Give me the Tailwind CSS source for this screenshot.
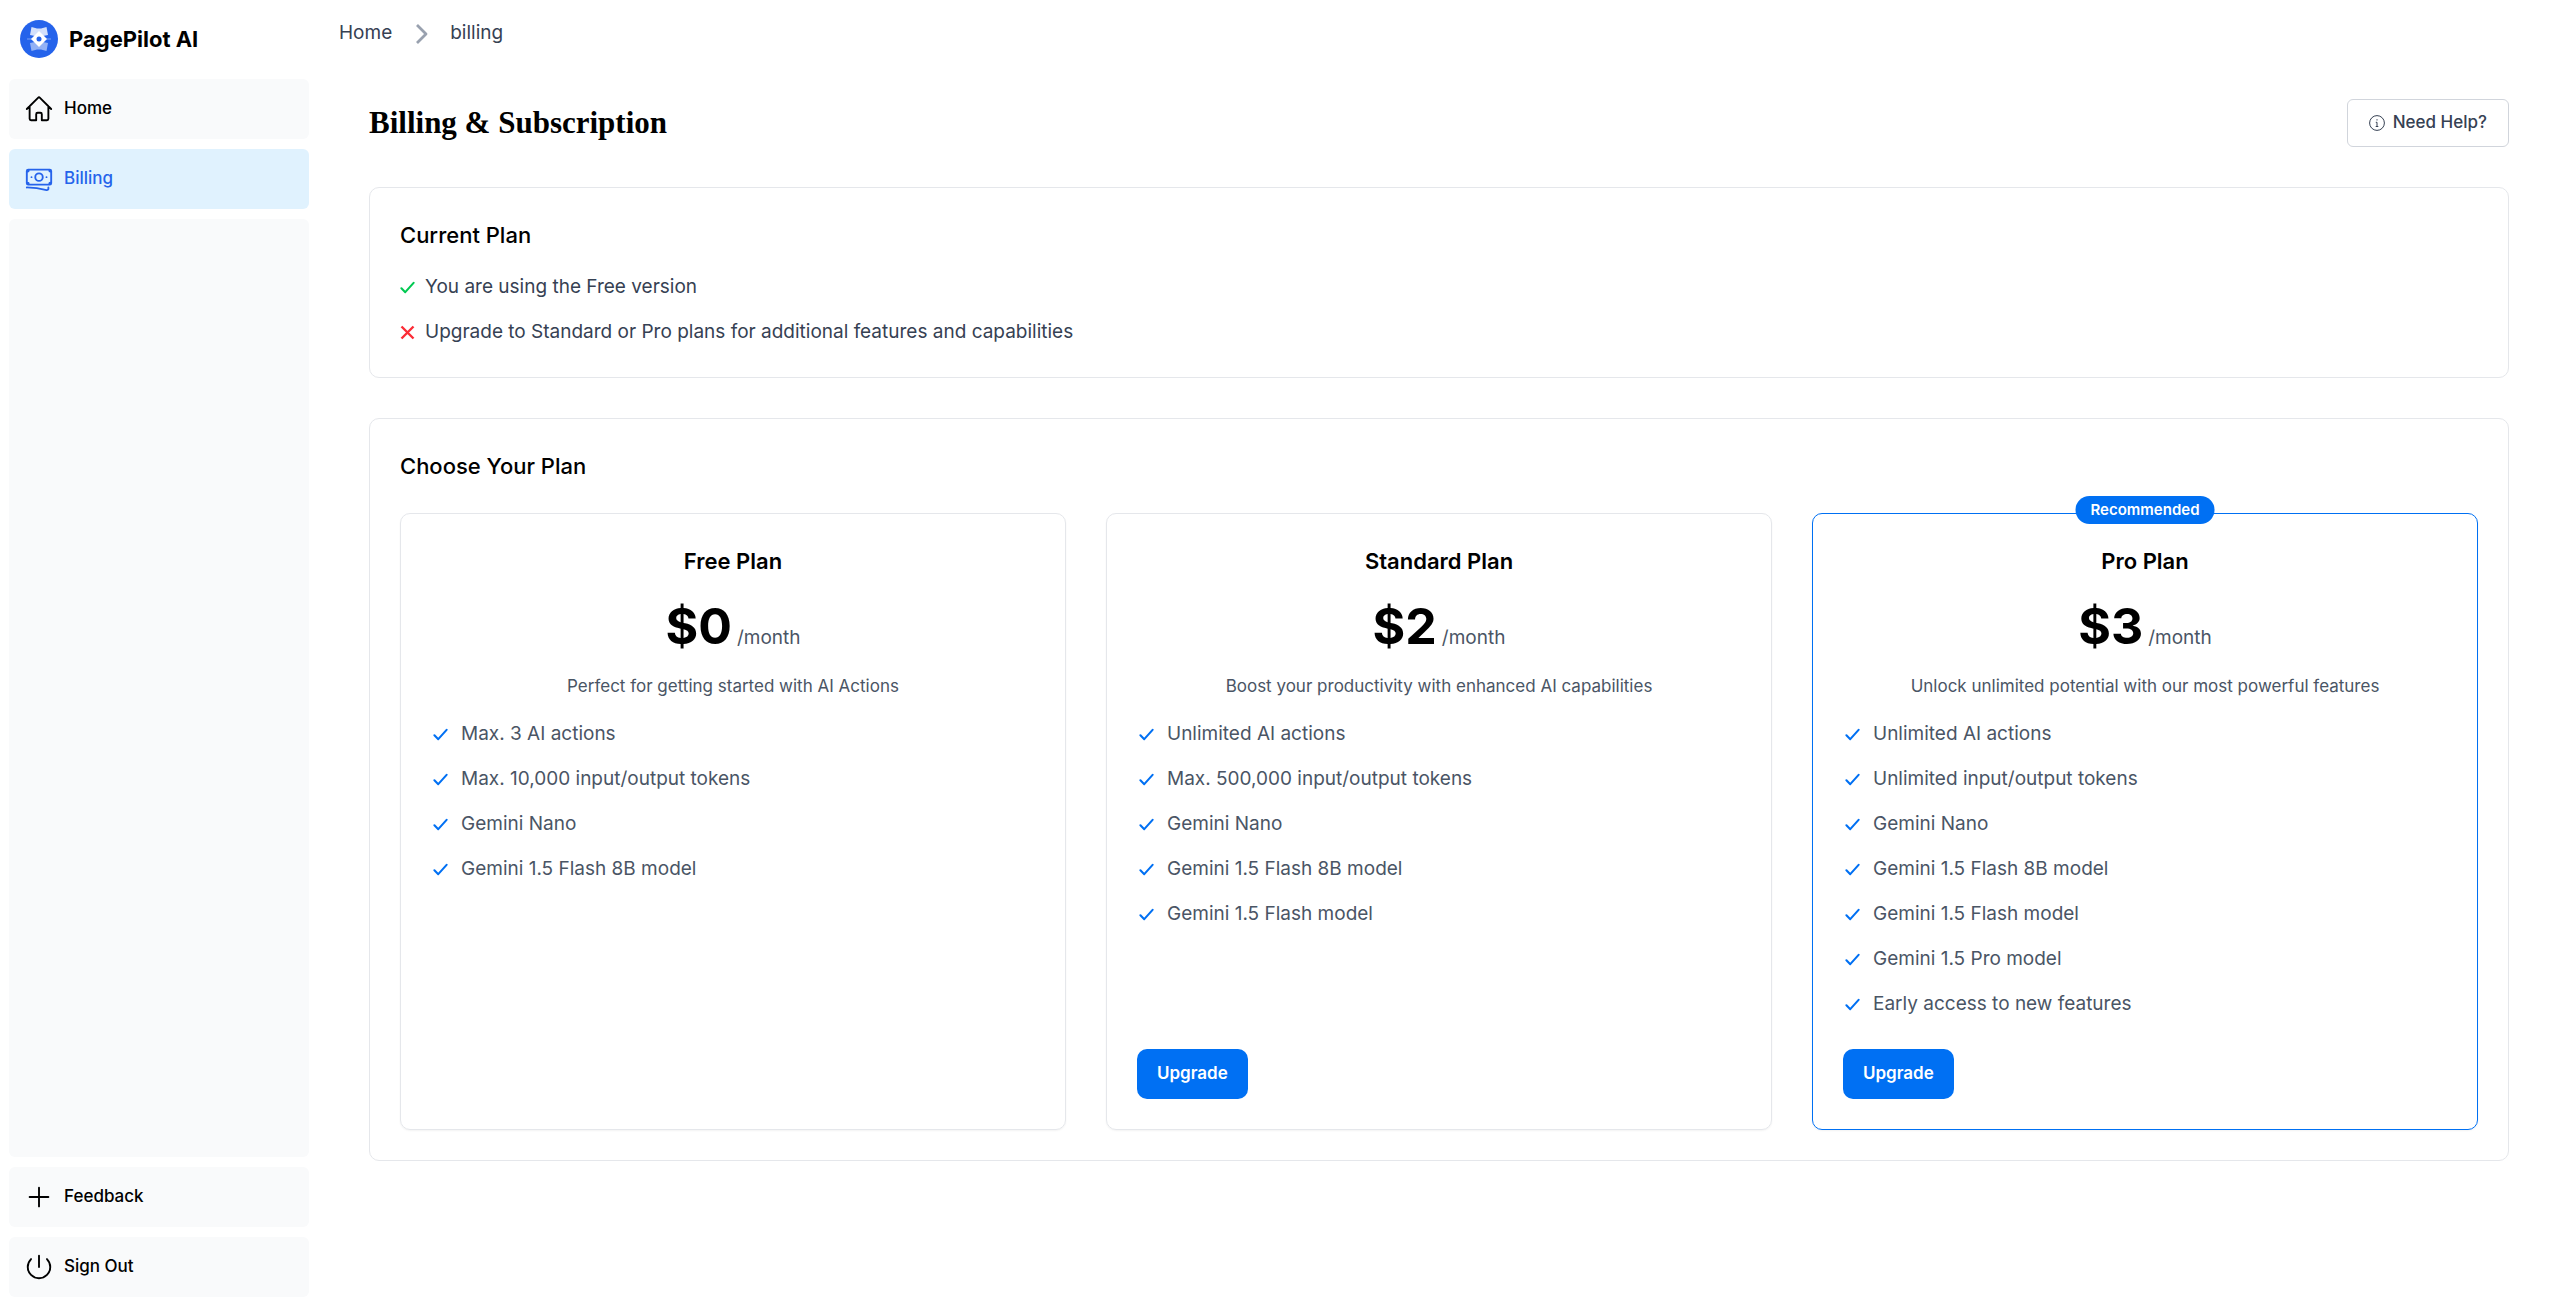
<!DOCTYPE html>
<html lang="en">
<head>
    <meta charset="UTF-8">
    <meta name="viewport" content="width=device-width, initial-scale=1.0">
    <title>PagePilot AI - Billing</title>
    <script src="https://cdn.jsdelivr.net/npm/@tailwindcss/browser@4"></script>
</head>
<body class="bg-white font-['Inter',sans-serif] text-black">
    <!-- Shared icons -->
    <svg class="hidden">
        <symbol id="check" viewBox="0 0 16 16">
            <path d="M1.5 8.8 5.6 13 14.5 3" fill="none" stroke="currentColor" stroke-width="2.2" stroke-linecap="round" stroke-linejoin="round"/>
        </symbol>
    </svg>

    <div class="flex min-h-screen">
        <!-- Sidebar -->
        <aside class="flex w-[309px] shrink-0 flex-col gap-[10px] pt-5 pb-[19px] pl-[9px]">
            <a href="#" class="mb-[11px] flex h-[38px] items-center gap-[11px] pl-[11px]">
                <svg class="size-[38px]" viewBox="0 0 38 38">
                    <circle cx="19" cy="19" r="19" fill="#2563eb"/>
                    <path d="M11.5 7 17 8.500h4L26.500 7 28 15l-5 1H15l-5-1z" fill="#fff" opacity=".8"/>
                    <path d="M11.500 31 17 29.500h4l5.500 1.500L28 23l-5-1h-8l-5 1z" fill="#fff" opacity=".5"/>
                    <path d="M7 19h24" stroke="#fff" stroke-width="1" opacity=".4"/>
                    <path d="m19 11 8 8-8 8-8-8z" fill="#fff"/>
                    <circle cx="19" cy="19" r="2.500" fill="#2563eb"/>
                </svg>
                <span class="text-[22px] font-bold">PagePilot AI</span>
            </a>
            <nav class="flex grow flex-col gap-[10px] text-[17px] font-medium">
                <a href="#" class="flex h-[60px] items-center gap-[10px] rounded-md bg-gray-50 px-[15px]">
                    <svg class="size-[30px]" viewBox="0 0 24 24" fill="none" stroke="currentColor" stroke-width="1.5" stroke-linecap="round" stroke-linejoin="round"><path d="m2.25 12 8.954-8.955c.44-.439 1.152-.439 1.591 0L21.75 12M4.500 9.750v10.125c0 .621.504 1.125 1.125 1.125H9.750v-4.875c0-.621.504-1.125 1.125-1.125h2.250c.621 0 1.125.504 1.125 1.125V21h4.125c.621 0 1.125-.504 1.125-1.125V9.750"/></svg>
                    Home
                </a>
                <a href="#" class="flex h-[60px] items-center gap-[10px] rounded-md bg-[#e0f2fe] px-[15px] text-[#2563eb]">
                    <svg class="size-[30px]" viewBox="0 0 24 24" fill="none" stroke="currentColor" stroke-width="1.5" stroke-linecap="round" stroke-linejoin="round"><path d="M2.250 18.750a60.070 60.070 0 0 1 15.797 2.101c.727.198 1.453-.342 1.453-1.096V18.750M3.750 4.500v.750A.750.750 0 0 1 3 6h-.750m0 0v-.375c0-.621.504-1.125 1.125-1.125H20.250M2.250 6v9m18-10.500v.750c0 .414.336.750.750.750h.750m-1.500-1.500h.375c.621 0 1.125.504 1.125 1.125v9.750c0 .621-.504 1.125-1.125 1.125h-.375m1.500-1.500H21a.750.750 0 0 0-.750.750v.750m0 0H3.750m0 0h-.375a1.125 1.125 0 0 1-1.125-1.125V15m1.500 1.500v-.750A.750.750 0 0 0 3 15h-.750M15 10.500a3 3 0 1 1-6 0 3 3 0 0 1 6 0Zm3 0h.008v.008H18V10.500Zm-12 0h.008v.008H6V10.500Z"/></svg>
                    Billing
                </a>
                <div class="grow rounded-md bg-gray-50"></div>
                <a href="#" class="flex h-[60px] items-center gap-[10px] rounded-md bg-gray-50 px-[15px]">
                    <svg class="size-[30px]" viewBox="0 0 24 24" fill="none" stroke="currentColor" stroke-width="1.5" stroke-linecap="round"><path d="M12 4.500v15m7.500-7.500h-15"/></svg>
                    Feedback
                </a>
                <button type="button" class="flex h-[60px] items-center gap-[10px] rounded-md bg-gray-50 px-[15px]">
                    <svg class="size-[30px]" viewBox="0 0 24 24" fill="none" stroke="currentColor" stroke-width="1.5" stroke-linecap="round"><path d="M5.636 5.636a9 9 0 1 0 12.728 0M12 3v9"/></svg>
                    Sign Out
                </button>
            </nav>
        </aside>

        <div class="grow">
            <!-- Breadcrumb -->
            <nav class="flex h-[67px] items-center gap-[19px] pl-[30px] text-[19px] text-gray-700" aria-label="Breadcrumb">
                <a href="#">Home</a>
                <svg class="h-5 w-5 text-gray-400" viewBox="0 0 20 20" fill="none" stroke="currentColor" stroke-width="2.8" stroke-linejoin="round"><path d="m6 1 9 9-9 9"/></svg>
                <a href="#">billing</a>
            </nav>

            <main class="pt-8 pr-[49px] pl-[60px]">
                <div class="mb-10 flex h-12 items-center justify-between">
                    <h1 class="font-['Liberation_Serif',serif] text-[31px] font-bold">Billing &amp; Subscription</h1>
                    <button type="button" class="flex h-12 items-center gap-2 rounded-md border border-gray-300 px-[21px] text-[17px] font-medium text-gray-700">
                        <svg class="size-4" viewBox="0 0 16 16" fill="none" stroke="currentColor"><circle cx="8" cy="8" r="7.400"/><path d="M8 4.200v1.300M6.800 7.300H8v4M6.700 11.500h2.600"/></svg>
                        Need Help?
                    </button>
                </div>

                <!-- Current plan -->
                <section class="mb-10 rounded-[10px] border border-gray-200 p-[30px]">
                    <h2 class="mb-[19px] text-[22px] leading-[35px] font-medium">Current Plan</h2>
                    <ul class="flex flex-col gap-[15px] text-[19px] leading-[30px] text-gray-700">
                        <li class="flex items-center gap-[10px]">
                            <svg class="size-[15px] text-green-500"><use href="#check"/></svg>
                            You are using the Free version
                        </li>
                        <li class="flex items-center gap-[10px]">
                            <svg class="size-[15px] text-red-500" viewBox="0 0 15 15" stroke="currentColor" stroke-width="2.4"><path d="m1.500 1.500 12 12m0-12-12 12"/></svg>
                            Upgrade to Standard or Pro plans for additional features and capabilities
                        </li>
                    </ul>
                </section>

                <!-- Plans -->
                <section class="rounded-[10px] border border-gray-200 p-[30px]">
                    <h2 class="mb-[29px] text-[22px] leading-[35px] font-medium">Choose Your Plan</h2>
                    <div id="plans" class="grid grid-cols-3 gap-10"></div>
                </section>
            </main>
        </div>
    </div>

    <script>
        const plans = [
            {
                name: 'Free Plan',
                price: '$0',
                description: 'Perfect for getting started with AI Actions',
                features: ['Max. 3 AI actions', 'Max. 10,000 input/output tokens', 'Gemini Nano', 'Gemini 1.5 Flash 8B model']
            },
            {
                name: 'Standard Plan',
                price: '$2',
                description: 'Boost your productivity with enhanced AI capabilities',
                features: ['Unlimited AI actions', 'Max. 500,000 input/output tokens', 'Gemini Nano', 'Gemini 1.5 Flash 8B model', 'Gemini 1.5 Flash model'],
                upgrade: true
            },
            {
                name: 'Pro Plan',
                price: '$3',
                description: 'Unlock unlimited potential with our most powerful features',
                features: ['Unlimited AI actions', 'Unlimited input/output tokens', 'Gemini Nano', 'Gemini 1.5 Flash 8B model', 'Gemini 1.5 Flash model', 'Gemini 1.5 Pro model', 'Early access to new features'],
                upgrade: true,
                recommended: true
            }
        ];

        document.getElementById('plans').innerHTML = plans.map(plan => `
            <article class="relative flex flex-col rounded-[10px] border p-[30px] shadow-xs ${plan.recommended ? 'border-[#0070f3]' : 'border-gray-200'}">
                ${plan.recommended ? '<span class="absolute -top-[18px] left-1/2 -translate-x-1/2 rounded-full bg-[#0070f3] px-[15px] text-[15px] leading-[28px] font-semibold text-white">Recommended</span>' : ''}
                <h3 class="text-center text-[22px] leading-[35px] font-semibold">${plan.name}</h3>
                <p class="mt-5 mb-[9px] flex items-baseline justify-center gap-[5px] leading-[55px]">
                    <span class="text-[50px] font-bold">${plan.price}</span>
                    <span class="text-[19px] text-gray-600">/month</span>
                </p>
                <p class="mb-5 text-center text-[17px] leading-[25px] text-gray-600">${plan.description}</p>
                <ul class="mb-[30px] flex grow flex-col gap-[15px] pl-0.5 text-[19px] leading-[30px] text-gray-600">
                    ${plan.features.map(feature => `
                    <li class="flex items-center gap-[13px]">
                        <svg class="size-[15px] text-[#0070f3]"><use href="#check"/></svg>
                        ${feature}
                    </li>`).join('')}
                </ul>
                ${plan.upgrade ? '<button type="button" class="h-[50px] self-start rounded-[10px] bg-[#0070f3] px-5 text-[17px] font-semibold text-white">Upgrade</button>' : ''}
            </article>
        `).join('');
    </script>
</body>
</html>
